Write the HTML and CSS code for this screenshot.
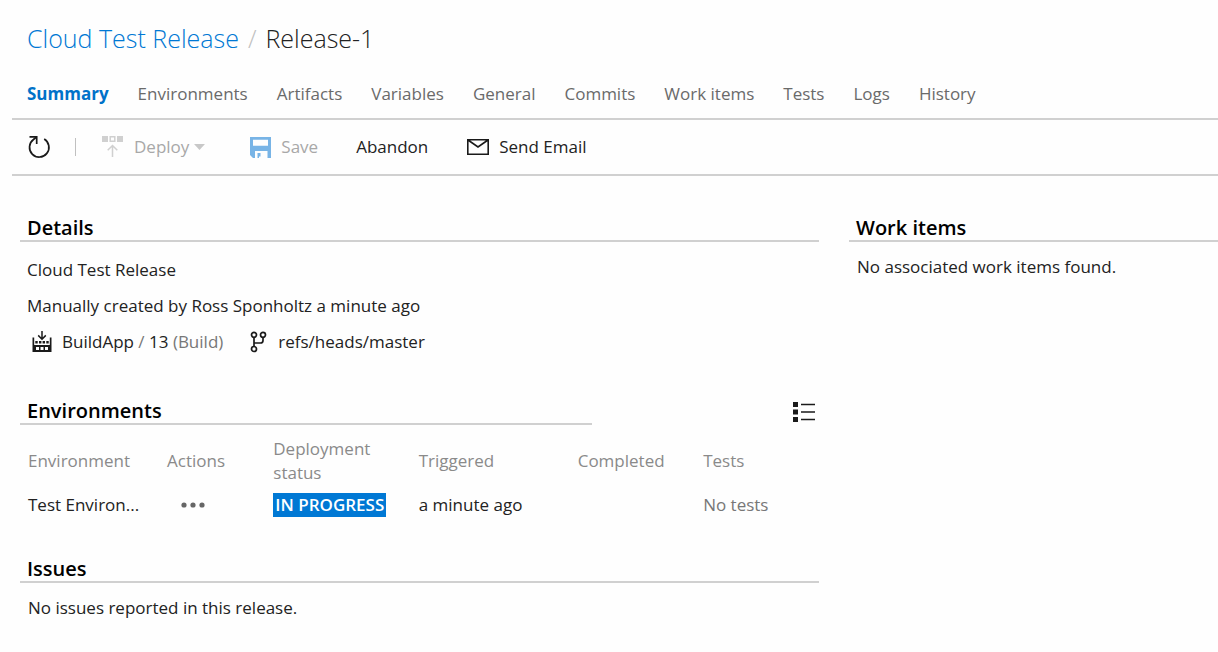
FILE: index.html
```html
<!DOCTYPE html>
<html lang="en">
<head>
<meta charset="utf-8">
<meta name="viewport" content="width=device-width, initial-scale=1">
<title>Release-1</title>
<link rel="stylesheet" href="styles.css">
</head>
<body>
<header class="page-header">
  <h1 class="breadcrumb"><a href="#" class="breadcrumb-link">Cloud Test Release</a><span class="breadcrumb-sep">/</span><span>Release-1</span></h1>
  <nav class="tabs">
    <a href="#" class="tab tab-active" aria-current="page">Summary</a>
    <a href="#" class="tab">Environments</a>
    <a href="#" class="tab">Artifacts</a>
    <a href="#" class="tab">Variables</a>
    <a href="#" class="tab">General</a>
    <a href="#" class="tab">Commits</a>
    <a href="#" class="tab">Work items</a>
    <a href="#" class="tab">Tests</a>
    <a href="#" class="tab">Logs</a>
    <a href="#" class="tab">History</a>
  </nav>
</header>
<div class="toolbar">
  <button type="button" class="tool" aria-label="Refresh">
    <svg width="24" height="24" viewBox="0 0 24 24" fill="none" stroke="#1a1a1a" stroke-width="1.700"><path d="M17.200 4A9.700 9.700 0 1 1 6.500 4.500L9.500 2"/><path d="M2.500 1.900h7.200v7"/></svg>
  </button>
  <span class="divider"></span>
  <button type="button" class="tool tool-deploy" disabled>
    <svg width="22" height="22" viewBox="0 0 22 22"><path fill="#d0d0d0" d="M0 0h6v6H0zM15 0h6v6h-6z"/><path fill="none" stroke="#d0d0d0" stroke-width="1.5" d="M8.2.8h4.6v4.4H8.2zM10.500 21V9.500M5.700 14.300l4.800-4.800 4.800 4.800"/></svg>
    <span>Deploy</span>
    <svg class="caret" width="11" height="6" viewBox="0 0 11 6"><path fill="#c8c8c8" d="M0 0h11L5.500 6z"/></svg>
  </button>
  <button type="button" class="tool tool-save" disabled>
    <svg width="21" height="21" viewBox="0 0 21 21"><path fill="#78b4e6" fill-rule="evenodd" d="M0 0h21v21h-3.500v-7H5v7H3l-3-3zM3 2.700v6h15v-6zM7.500 16h3v3.500h-1.500v1.500H7.500z"/></svg>
    <span>Save</span>
  </button>
  <button type="button" class="tool tool-abandon">Abandon</button>
  <button type="button" class="tool">
    <svg width="22" height="16" viewBox="0 0 22 16" fill="none" stroke="#1a1a1a" stroke-width="1.600"><path d="M.8.8h20.400v14.400H.8zM1 1l10 7 10-7"/></svg>
    <span>Send Email</span>
  </button>
</div>
<div class="content">
  <main class="primary">
    <section class="details">
      <h2 class="heading">Details</h2>
      <p class="line">Cloud Test Release</p>
      <p class="line">Manually created by Ross Sponholtz a minute ago</p>
      <p class="line source">
        <svg width="20" height="22" viewBox="0 0 20 22"><path fill="#1a1a1a" fill-rule="evenodd" d="M.5 6.500H2.200V14h15.600V6.500h1.700V21H.5zM4 16v3h3v-3zM8.500 16v3h3v-3zM13 16v3h3v-3zM3.300 10h2.400v2.400H3.300zM7 10h2.400v2.400H7zM10.600 10H13v2.400h-2.400zM14.300 10h2.400v2.400h-2.400z"/><path fill="none" stroke="#1a1a1a" stroke-width="1.500" d="M10 0v8M6.200 4.400 10 8.200l3.800-3.800"/></svg>
        <span class="build">BuildApp <span class="dim">/</span> 13 <span class="dim">(Build)</span></span>
        <svg width="18" height="22" viewBox="0 0 18 22" fill="none" stroke="#1a1a1a" stroke-width="1.700"><circle cx="4" cy="3.800" r="2.500"/><circle cx="13" cy="3.800" r="2.500"/><circle cx="4" cy="18" r="2.500"/><path d="M4 6.300v9.200M13 6.300v3.200q0 2.500-2.500 2.500H4"/></svg>
        <span>refs/heads/master</span>
      </p>
    </section>
    <section class="environments">
      <div class="heading-row">
        <h2 class="heading">Environments</h2>
        <button type="button" class="list-button" aria-label="List view">
          <svg width="22" height="20" viewBox="0 0 22 20"><path fill="#1a1a1a" d="M0 0h5v5H0zM0 7.500h5v5H0zM0 15h5v5H0zM8 1.700h14v1.500H8zM8 9.200h14v1.500H8zM8 16.700h14v1.500H8z"/></svg>
        </button>
      </div>
      <table class="grid">
        <colgroup><col class="c-env"><col class="c-act"><col class="c-status"><col class="c-trig"><col class="c-comp"><col></colgroup>
        <thead><tr><th>Environment</th><th>Actions</th><th>Deployment<br>status</th><th>Triggered</th><th>Completed</th><th>Tests</th></tr></thead>
        <tbody><tr>
          <td>Test Environ...</td>
          <td><button type="button" class="more" aria-label="More actions"><svg width="24" height="6" viewBox="0 0 24 6" fill="#666"><circle cx="3" cy="3" r="2.600"/><circle cx="12" cy="3" r="2.600"/><circle cx="21" cy="3" r="2.600"/></svg></button></td>
          <td><span class="status">IN PROGRESS</span></td>
          <td>a minute ago</td>
          <td></td>
          <td class="no-tests">No tests</td>
        </tr></tbody>
      </table>
    </section>
    <section>
      <h2 class="heading">Issues</h2>
      <p class="note">No issues reported in this release.</p>
    </section>
  </main>
  <aside class="secondary">
    <h2 class="heading">Work items</h2>
    <p class="note">No associated work items found.</p>
  </aside>
</div>
</body>
</html>
```
FILE: styles.css
```css
* { box-sizing: border-box; }
body {
  margin: 0;
  background: #fefefe;
  color: #222;
  font: 17px/24px "Open Sans", "Noto Sans", sans-serif;
}
h1, h2, p { margin: 0; }
a { text-decoration: none; }
button { padding: 0; border: 0; background: none; font: inherit; color: inherit; }
svg { display: block; flex: none; }

.page-header {
  margin-left: 12px;
  padding: 18px 0 0 15px;
  border-bottom: 2px solid #d0d0d0;
}
.breadcrumb { display: flex; gap: 9px; font-size: 25px; line-height: 40px; font-weight: 300; }
.breadcrumb-link { color: #0078d4; }
.breadcrumb-sep { color: #c0c0c0; }
.tabs { display: flex; gap: 29px; padding: 24px 0 12px; }
.tab { color: #6a6a6a; white-space: nowrap; }
.tab-active { color: #0072c9; font-weight: 700; }

.toolbar {
  display: flex;
  align-items: center;
  height: 56px;
  margin-left: 12px;
  padding-left: 15px;
  border-bottom: 2px solid #d0d0d0;
}
.tool { display: flex; align-items: center; gap: 10px; white-space: nowrap; }
.tool:disabled { color: #a8a8a8; }
.divider { width: 1px; height: 18px; margin: 0 26px 0 24px; background: #c0c0c0; }
.caret { margin-left: -5px; }
.tool-deploy { margin-right: 45px; }
.tool-save { margin-right: 38px; }
.tool-abandon { margin-right: 39px; }

.content {
  display: grid;
  grid-template-columns: 799fr 369fr;
  gap: 30px;
  padding: 40px 0 24px 20px;
}
.heading {
  padding-left: 7px;
  border-bottom: 2px solid #d0d0d0;
  color: #000;
  font-size: 20px;
  line-height: 24px;
  font-weight: 600;
}
.details { padding-bottom: 45px; }
.line { padding-left: 7px; margin-top: 12px; }
.heading + .line { margin-top: 16px; }
.source { display: flex; align-items: center; padding-left: 12px; gap: 10px; }
.build { margin-right: 17px; }
.dim { color: #777; }
.note { padding: 13px 0 0 8px; }

.heading-row { display: flex; justify-content: space-between; align-items: center; padding-right: 4px; }
.heading-row .heading { flex: 0 0 72%; }
.grid { width: 100%; table-layout: fixed; border-collapse: collapse; margin: 12px 0 40px; }
.grid th, .grid td { padding: 0 0 0 8px; text-align: left; vertical-align: middle; white-space: nowrap; }
.grid th { color: #8a8a8a; font-weight: 400; }
.grid td { padding-top: 8px; }
.c-env { width: 17.4%; }
.c-act { width: 13.3%; }
.c-status { width: 18.2%; }
.c-trig { width: 19.9%; }
.c-comp { width: 15.7%; }
.more { display: block; margin-left: 14px; }
.status { display: inline-block; padding: 0 2px; background: #0078d4; color: #fff; font-weight: 600; }
.grid .no-tests { color: #777; }
```
